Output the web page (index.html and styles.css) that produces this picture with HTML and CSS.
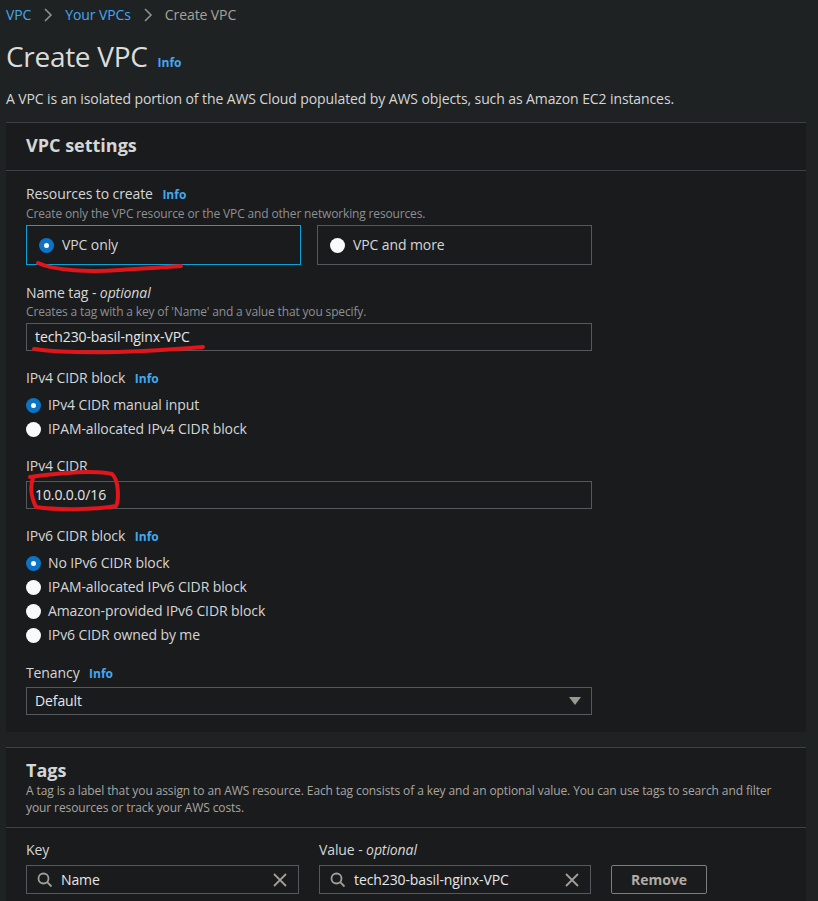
FILE: index.html
```html
<!DOCTYPE html>
<html lang="en">
<head>
<meta charset="utf-8">
<title>Create VPC</title>
<link rel="stylesheet" href="styles.css">
</head>
<body>
<div class="page">
  <nav class="crumbs">
    <a class="crumb-link">VPC</a>
    <svg class="chev" viewBox="0 0 10 16" width="10" height="16"><path d="M2 2 L8 8 L2 14" fill="none" stroke="#8f8f8f" stroke-width="1.6"/></svg>
    <a class="crumb-link">Your VPCs</a>
    <svg class="chev" viewBox="0 0 10 16" width="10" height="16"><path d="M2 2 L8 8 L2 14" fill="none" stroke="#8f8f8f" stroke-width="1.6"/></svg>
    <span class="crumb-current">Create VPC</span>
  </nav>

  <div class="title-row">
    <h1 class="title">Create VPC</h1>
    <span class="info">Info</span>
  </div>
  <p class="page-desc">A VPC is an isolated portion of the AWS Cloud populated by AWS objects, such as Amazon EC2 instances.</p>

  <section class="panel">
    <header class="panel-head">
      <h2 class="panel-title">VPC settings</h2>
    </header>
    <div class="panel-body">
      <div class="field field-first">
        <div class="label">Resources to create <span class="info">Info</span></div>
        <div class="desc">Create only the VPC resource or the VPC and other networking resources.</div>
        <div class="tiles">
          <div class="tile tile-on"><span class="radio radio-on"></span><span>VPC only</span></div>
          <div class="tile"><span class="radio"></span><span>VPC and more</span></div>
        </div>
      </div>

      <div class="field">
        <div class="label">Name tag - <em>optional</em></div>
        <div class="desc">Creates a tag with a key of 'Name' and a value that you specify.</div>
        <div class="input input-name">tech230-basil-nginx-VPC</div>
      </div>

      <div class="field field-tight">
        <div class="label">IPv4 CIDR block <span class="info">Info</span></div>
        <div class="radios">
          <div class="radio-row"><span class="radio radio-on"></span><span>IPv4 CIDR manual input</span></div>
          <div class="radio-row"><span class="radio"></span><span>IPAM-allocated IPv4 CIDR block</span></div>
        </div>
      </div>

      <div class="field">
        <div class="label">IPv4 CIDR</div>
        <div class="input input-gap">10.0.0.0/16</div>
      </div>

      <div class="field field-v6">
        <div class="label">IPv6 CIDR block <span class="info">Info</span></div>
        <div class="radios">
          <div class="radio-row"><span class="radio radio-on"></span><span>No IPv6 CIDR block</span></div>
          <div class="radio-row"><span class="radio"></span><span>IPAM-allocated IPv6 CIDR block</span></div>
          <div class="radio-row"><span class="radio"></span><span>Amazon-provided IPv6 CIDR block</span></div>
          <div class="radio-row"><span class="radio"></span><span>IPv6 CIDR owned by me</span></div>
        </div>
      </div>

      <div class="field field-last">
        <div class="label">Tenancy <span class="info">Info</span></div>
        <div class="input select">
          <span>Default</span>
          <svg viewBox="0 0 12 10" width="12" height="10"><path d="M0 1 L12 1 L6 9 Z" fill="#9a9893"/></svg>
        </div>
      </div>
    </div>
  </section>

  <section class="panel panel-tags">
    <header class="panel-head tags-head">
      <h2 class="panel-title">Tags</h2>
      <div class="tags-desc">A tag is a label that you assign to an AWS resource. Each tag consists of a key and an optional value. You can use tags to search and filter your resources or track your AWS costs.</div>
    </header>
    <div class="panel-body tags-body">
      <div class="tag-row">
        <div class="tag-col">
          <div class="label">Key</div>
          <div class="input search">
            <svg class="ic" viewBox="0 0 16 16" width="16" height="16"><circle cx="6.5" cy="6.5" r="5" fill="none" stroke="#a39e96" stroke-width="1.8"/><path d="M10.2 10.2 L14.5 14.5" stroke="#a39e96" stroke-width="1.8"/></svg>
            <span class="search-text">Name</span>
            <svg class="ic" viewBox="0 0 16 16" width="16" height="16"><path d="M2 2 L14 14 M14 2 L2 14" stroke="#a39e96" stroke-width="1.8"/></svg>
          </div>
        </div>
        <div class="tag-col">
          <div class="label">Value - <em>optional</em></div>
          <div class="input search">
            <svg class="ic" viewBox="0 0 16 16" width="16" height="16"><circle cx="6.5" cy="6.5" r="5" fill="none" stroke="#a39e96" stroke-width="1.8"/><path d="M10.2 10.2 L14.5 14.5" stroke="#a39e96" stroke-width="1.8"/></svg>
            <span class="search-text">tech230-basil-nginx-VPC</span>
            <svg class="ic" viewBox="0 0 16 16" width="16" height="16"><path d="M2 2 L14 14 M14 2 L2 14" stroke="#a39e96" stroke-width="1.8"/></svg>
          </div>
        </div>
        <button class="btn">Remove</button>
      </div>
    </div>
  </section>
</div>

<svg class="marks" viewBox="0 0 818 901" width="818" height="901">
  <path d="M38 263 C55 271 90 272 120 270 C150 268 170 267 181 266" fill="none" stroke="#e0161a" stroke-width="4" stroke-linecap="round"/>
  <path d="M34 349 C70 354 130 353 203 347" fill="none" stroke="#e0161a" stroke-width="4" stroke-linecap="round"/>
  <path d="M30 477 C60 473 95 470 112 474 C119 480 119 500 116 506 C95 510 55 510 36 507 C31 497 30 487 33 478" fill="none" stroke="#e0161a" stroke-width="4" stroke-linecap="round" stroke-linejoin="round"/>
</svg>
</body>
</html>
```

FILE: styles.css
```css
* { box-sizing: border-box; }
html, body { margin: 0; padding: 0; }
body {
  background: #1f2223;
  color: #d5d6d6;
  font-family: "Open Sans", "Noto Sans", Arial, sans-serif;
  font-size: 14px;
  line-height: 20px;
  letter-spacing: -0.1px;
  width: 818px;
  height: 901px;
  overflow: hidden;
  position: relative;
}
.page { padding: 5px 12px 0 6px; }

.crumbs { display: flex; align-items: center; gap: 12px; height: 20px; }
.crumb-link { color: #44a8f0; }
.crumb-current { color: #a8a29a; }
.chev { display: block; }

.title-row { display: flex; align-items: baseline; gap: 10px; margin-top: 13px; height: 40px; }
.title { margin: 0; font-size: 28px; font-weight: 400; line-height: 36px; color: #dcdcdc; letter-spacing: -0.3px; }
.info { color: #44a8f0; font-size: 12px; font-weight: 700; margin-left: 6px; letter-spacing: 0; }
.title-row .info { margin-left: 0; }

.page-desc { margin: 11px 0 0; color: #d5d6d6; }

.panel { background: #1a1b1d; border-top: 1px solid #3d4044; margin-top: 13px; }
.panel-head { padding: 11px 20px 14px; border-bottom: 1px solid #3d4044; }
.panel-title { margin: 0; font-size: 18px; font-weight: 700; line-height: 22px; color: #d5d6d6; letter-spacing: 0; }
.panel-body { padding: 13px 20px 17px; }

.field { width: 566px; margin-bottom: 17px; }
.field-first { margin-bottom: 18px; }
.field-tight { margin-bottom: 15px; }
.field-v6 { margin-bottom: 16px; }
.field-last { margin-bottom: 0; }
.label { color: #d5d6d6; }
.label em { font-style: italic; }
.desc { font-size: 12px; line-height: 16px; color: #8e9094; margin-top: 1px; letter-spacing: -0.15px; }

.tiles { display: flex; gap: 16px; margin-top: 3px; }
.tile { flex: 1; height: 40px; border: 1px solid #55595e; display: flex; align-items: center; gap: 8px; padding-left: 12px; }
.tile-on { border-color: #0aa0d8; }

.radio { width: 15px; height: 15px; border-radius: 50%; background: #fafafa; flex: none; display: inline-block; }
.radio-on { background: #0b74c6; position: relative; }
.radio-on::after { content: ""; position: absolute; left: 5px; top: 5px; width: 5px; height: 5px; border-radius: 50%; background: #fff; }

.radios { margin-top: 4px; }
.radio-row { display: flex; align-items: center; gap: 7px; height: 24px; }

.input { height: 28px; border: 1px solid #55595e; background: #1a1b1d; display: flex; align-items: center; padding: 0 8px; margin-top: 4px; color: #e6e6e6; }
.input-name { margin-top: 3px; }
.input-gap { margin-top: 5px; }
.select { justify-content: space-between; padding-right: 10px; margin-top: 3px; }

.panel-tags { margin-top: 15px; }
.tags-head { padding: 11px 20px 11px; }
.tags-desc { font-size: 12px; line-height: 17px; color: #a9a6a1; margin-top: 1px; width: 760px; letter-spacing: -0.1px; }
.tags-body { padding-top: 12px; }
.tag-row { display: flex; align-items: flex-end; gap: 20px; }
.tag-col { display: flex; flex-direction: column; }
.tag-col:first-child { width: 273px; }
.tag-col:nth-child(2) { width: 272px; }
.search { height: 29px; padding: 0 10px 0 10px; gap: 8px; margin-top: 5px; }
.search-text { flex: 1; }
.ic { display: block; flex: none; }
.btn { height: 29px; width: 96px; background: transparent; border: 1px solid #7b7d80; color: #b1aca5; font-family: inherit; font-size: 14px; font-weight: 700; border-radius: 2px; }

.marks { position: absolute; left: 0; top: 0; pointer-events: none; }
```
